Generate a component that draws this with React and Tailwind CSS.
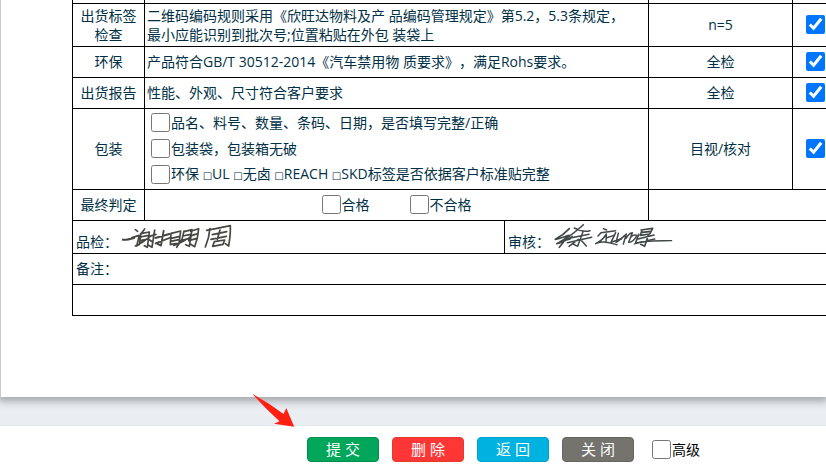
import React from "react";

const cell = "border-r border-b border-black p-0 pb-px";

function Check({ label, checked = false, className = "" }) {
  return (
    <label className={`flex items-center gap-px ${className}`}>
      <input type="checkbox" defaultChecked={checked} className="m-0 size-[19px] shrink-0" />
      <span className="whitespace-nowrap">{label}</span>
    </label>
  );
}

function Square() {
  return <span className="font-['DejaVu_Sans',sans-serif] text-[10px]">□</span>;
}

function InspectionRow({ name, method, height, children }) {
  return (
    <tr className={height}>
      <th scope="row" className={`${cell} px-1 text-center font-normal`}>{name}</th>
      <td colSpan={2} className={`${cell} pl-[2px]`}>{children}</td>
      <td className={`${cell} text-center`}>{method}</td>
      <td className={cell}>
        <input
          type="checkbox"
          defaultChecked
          aria-label="判定"
          className="mx-auto block size-[19px]"
        />
      </td>
    </tr>
  );
}

function InspectorSignature() {
  return (
    <svg width="110" height="28" viewBox="186 21 330 84" fill="none" stroke="#454541" strokeLinecap="round" strokeLinejoin="round" role="img" aria-label="品检签名">
      <path strokeWidth="6" d="M188 71C197 73 208 70 222 66" />
      <path strokeWidth="5" d="M226 41L233 46M216 65L238 58L230 90L246 78M254 39L243 53M243 52L238 86M242 53L268 48L262 94L253 89M241 63L266 58M240 74L264 69M226 90C240 84 256 74 270 62M266 62L288 55M284 42L276 94L266 88M269 72L278 78" />
      <path strokeWidth="5.5" d="M286 66L328 54M311 44L303 89L290 82M287 82L328 66" />
      <path strokeWidth="5" d="M333 52L331 86M334 52L362 45L357 82L331 85M333 67L360 61M332 76L357 71M372 45L366 70L350 94M372 47L396 41L388 91L377 86M368 60L392 55M364 73L390 67M341 88C364 82 384 68 402 55M392 46L416 38L412 66L404 92L391 84M391 60L414 53M386 74L411 67" />
      <path strokeWidth="5" d="M450 38L445 66L436 93M440 43C462 39 488 34 511 29C512 50 509 72 506 90L496 83M457 56L500 47M480 42L472 70M453 70L499 61M463 77L458 91L489 85L494 72L463 77" />
    </svg>
  );
}

function ReviewerSignature() {
  return (
    <svg width="120" height="28" viewBox="195 21 360 84" fill="none" stroke="#424748" strokeLinecap="round" strokeLinejoin="round" role="img" aria-label="审核签名">
      <path strokeWidth="5" d="M241 38C230 50 214 62 199 70C211 68 225 62 240 58C230 68 216 77 203 83C218 80 236 70 250 62M238 60L211 94M213 77L243 69" />
      <path strokeWidth="4.5" d="M283 26C270 39 251 53 234 66M256 36C270 44 286 48 303 44M244 66L300 55M235 80L308 64M282 47L266 91L252 84M268 70L240 91M276 72L292 90" />
      <path strokeWidth="4.5" d="M343 38L353 42M327 60L336 50L380 44M352 54C345 66 334 77 320 83C338 73 358 80 384 86M352 56L351 77M352 66L374 58M380 50L366 79L398 68" />
      <path strokeWidth="4.5" d="M388 52L381 79C392 73 403 62 412 54L403 84M411 67C416 58 424 51 430 50L419 79C428 80 440 68 444 58C436 54 427 60 424 66" />
      <path strokeWidth="5" d="M449 55L440 80M456 42L491 37L482 54L454 58L459 43M460 49L486 46M447 69L495 57M444 81L497 69M479 55L467 91L455 85" />
      <path strokeWidth="4" d="M436 84C458 73 500 75 548 74" />
    </svg>
  );
}

function InspectionTable() {
  return (
    <table className="w-[767px] table-fixed border-separate border-spacing-0 border-l border-black text-[14px] leading-[19px] text-[#003046] [text-spacing-trim:space-all]">
      <colgroup>
        <col className="w-[72px]" />
        <col className="w-[360px]" />
        <col className="w-[144px]" />
        <col className="w-[144px]" />
        <col className="w-[46px]" />
      </colgroup>
      <tbody>
        <tr className="h-1">
          <td className={cell} />
          <td colSpan={2} className={cell} />
          <td className={cell} />
          <td className={cell} />
        </tr>
        <InspectionRow height="h-[43px]" name={<>出货标签<br />检查</>} method="n=5">
          二维码编码规则采用《欣旺达物料及产 品编码管理规定》第5.2，5.3条规定，
          <br />
          最小应能识别到批次号;位置粘贴在外包 装袋上
        </InspectionRow>
        <InspectionRow height="h-[31px]" name="环保" method="全检">
          产品符合GB/T 30512-2014《汽车禁用物 质要求》，满足Rohs要求。
        </InspectionRow>
        <InspectionRow height="h-[31px]" name="出货报告" method="全检">
          性能、外观、尺寸符合客户要求
        </InspectionRow>
        <InspectionRow height="h-[81px]" name="包装" method="目视/核对">
          <div className="pl-1">
            <Check className="h-[26px]" label="品名、料号、数量、条码、日期，是否填写完整/正确" />
            <Check className="h-[26px]" label="包装袋，包装箱无破" />
            <Check
              className="h-[26px]"
              label={<>环保 <Square />UL <Square />无卤 <Square />REACH <Square />SKD标签是否依据客户标准贴完整</>}
            />
          </div>
        </InspectionRow>
        <tr className="h-[31px]">
          <th scope="row" className={`${cell} text-center font-normal`}>最终判定</th>
          <td colSpan={2} className={cell}>
            <div className="flex justify-center gap-10">
              <Check label="合格" />
              <Check label="不合格" />
            </div>
          </td>
          <td colSpan={2} className={cell} />
        </tr>
        <tr className="h-[33px]">
          <td colSpan={2} className={`${cell} pl-[3px]`}>
            <div className="flex items-end gap-1">
              品检：
              <InspectorSignature />
            </div>
          </td>
          <td colSpan={3} className={`${cell} pl-[3px]`}>
            <div className="flex items-end gap-1">
              审核：
              <ReviewerSignature />
            </div>
          </td>
        </tr>
        <tr className="h-[31px]">
          <td colSpan={5} className={`${cell} pl-[3px]`}>备注：</td>
        </tr>
        <tr className="h-[31px]">
          <td colSpan={5} className={cell} />
        </tr>
      </tbody>
    </table>
  );
}

const button =
  "h-[25px] w-[72px] shrink-0 rounded-[4px] border text-center text-[15px] leading-none text-white";

export default function App() {
  return (
    <div className="flex min-h-screen flex-col overflow-hidden bg-[#eaeef3] font-['Open_Sans','Noto_Sans_CJK_SC',sans-serif]">
      <main className="overflow-hidden pb-7">
        <section className="border-l border-[#c9cacc] bg-white pb-[81px] pl-[71px] shadow-[0_2px_8px_2px_rgba(0,0,0,0.32)]">
          <InspectionTable />
        </section>
      </main>
      <footer className="relative grow border-t border-[#e4e6e9] bg-white pt-[11px]">
        <svg className="absolute -top-[33px] left-[252px]" width="43" height="35" viewBox="252 392 43 35" aria-hidden="true">
          <path fill="#ff2012" d="M252.3 392.8Q269 402 283.6 413L286.3 407L294.2 425.8L274 422.8L279.5 420.3Q265 407 252.3 392.8Z" />
        </svg>
        <div className="flex items-center gap-[13px] pl-[307px]">
          <button type="button" className={`${button} border-[#008d4c] bg-[#00a65a]`}>提 交</button>
          <button type="button" className={`${button} border-[#e23a2e] bg-[#ff3636]`}>删 除</button>
          <button type="button" className={`${button} border-[#00a3cc] bg-[#00b2e0]`}>返 回</button>
          <button type="button" className={`${button} border-[#666660] bg-[#74736e]`}>关 闭</button>
          <Check className="ml-[5px] text-[14px] text-black" label="高级" />
        </div>
      </footer>
    </div>
  );
}
